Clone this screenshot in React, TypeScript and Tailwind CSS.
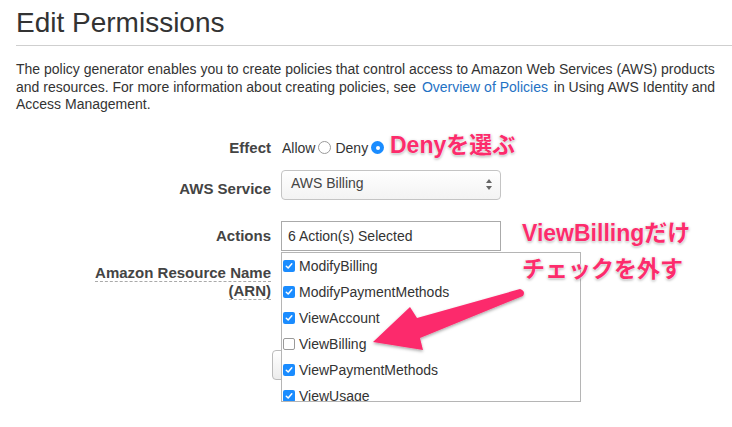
import React from "react";

const FONT = { fontFamily: '"Liberation Sans", Arial, "Noto Sans CJK JP", sans-serif' };

function Check({ checked }: { checked: boolean }) {
  if (!checked)
    return <span className="w-[12px] h-[12px] rounded-[2px] border border-[#9a9a9a] bg-white shrink-0" />;
  return (
    <span className="w-[12px] h-[12px] rounded-[2px] bg-[#1a8cff] shrink-0 flex items-center justify-center">
      <svg width="8" height="8" viewBox="0 0 8 8">
        <path d="M1.3 4.2 L3.2 6 L6.8 1.8" fill="none" stroke="#fff" strokeWidth="1.5" strokeLinecap="round" strokeLinejoin="round" />
      </svg>
    </span>
  );
}

const items: [string, boolean][] = [
  ["ModifyBilling", true],
  ["ModifyPaymentMethods", true],
  ["ViewAccount", true],
  ["ViewBilling", false],
  ["ViewPaymentMethods", true],
  ["ViewUsage", true],
];

export default function App() {
  const note = "[text-shadow:0_0_2px_#fff,0_0_2px_#fff,0_1px_3px_rgba(0,0,0,0.45)]";
  return (
    <div className="relative w-[732px] h-[427px] overflow-hidden bg-white text-[#333]" style={FONT}>
      <div className="pl-4">
        <h1 className="pt-[6px] text-[28px] leading-[34px] font-normal text-[#333]">Edit Permissions</h1>
        <div className="mt-[5px] h-px bg-[#cfcfcf]" />
        <p className="mt-[15px] text-[14px] leading-[17.5px] whitespace-nowrap">
          The policy generator enables you to create policies that control access to Amazon Web Services (AWS) products
          <br />
          and resources. For more information about creating policies, see{" "}
          <span className="text-[#1f72c4] px-[2px]">Overview of Policies</span> in Using AWS Identity and
          <br />
          Access Management.
        </p>

        {/* Effect */}
        <div className="mt-[21px] flex h-[26px] leading-[26px] text-[14px]">
          <div className="w-[255px] text-right font-bold text-[15px] text-[#444]">Effect</div>
          <div className="ml-[11px] flex items-center">
            <span>Allow</span>
            <span className="ml-[3px] w-[13px] h-[13px] rounded-full border border-[#9a9a9a] bg-white" />
            <span className="ml-[4px]">Deny</span>
            <span className="ml-[3px] w-[13px] h-[13px] rounded-full bg-[#1a8cff] flex items-center justify-center">
              <span className="w-[4px] h-[4px] rounded-full bg-white" />
            </span>
          </div>
        </div>

        {/* AWS Service */}
        <div className="mt-[9px] flex h-[30px] text-[14px]">
          <div className="w-[255px] h-[30px] text-right font-bold text-[15px] text-[#444] leading-[38px]">AWS Service</div>
          <div className="ml-[10px] w-[220px] h-[30px] rounded-[4px] border border-[#c4c4c4] bg-gradient-to-b from-white to-[#f3f3f3] flex items-center justify-between pl-[9px] pr-[7px] pb-[3px] text-[#444]">
            <span>AWS Billing</span>
            <svg width="8" height="13" viewBox="0 0 8 13" className="mt-[3px]">
              <path d="M4 1 L7 5 L1 5 Z" fill="#666" />
              <path d="M4 12 L7 8 L1 8 Z" fill="#666" />
            </svg>
          </div>
        </div>

        {/* Actions */}
        <div className="mt-[21px] flex text-[14px]">
          <div className="w-[255px] text-right font-bold text-[15px] text-[#444] leading-[30px]">Actions</div>
          <div className="ml-[10px] w-[220px] h-[30px] border border-[#aaa] bg-white pl-[6px] leading-[28px] text-[#333]">
            6 Action(s) Selected
          </div>
        </div>

        {/* ARN + list */}
        <div className="mt-px flex text-[14px]">
          <div className="w-[255px] text-right font-bold text-[15px] text-[#444] leading-[18px] pt-[12px]">
            <span className="border-b border-dashed border-[#aaa]">
              Amazon Resource Name
              <br />
              (ARN)
            </span>
          </div>
          <div className="ml-[10px] relative">
            <div className="absolute left-[-9px] top-[98px] w-[24px] h-[30px] rounded-[4px] border border-[#bbb] bg-gradient-to-b from-white to-[#ececec]" />
            <div className="relative w-[300px] h-[150px] border border-[#b5b5b5] bg-white overflow-hidden">
              {items.map(([name, c]) => (
                <div key={name} className="flex items-center h-[26px] leading-[26px] pl-[1px]">
                  <Check checked={c} />
                  <span className="ml-[4px] text-[#333]">{name}</span>
                </div>
              ))}
            </div>
          </div>
        </div>
      </div>

      {/* Annotations */}
      <div
        className={`absolute left-[390px] top-[132px] text-[23px] leading-[26px] font-bold text-[#fc2c6c] whitespace-nowrap ${note}`}
      >
        Denyを選ぶ
      </div>
      <div
        className={`absolute left-[522px] top-[215px] text-[23px] leading-[36px] font-bold text-[#fc2c6c] whitespace-nowrap ${note}`}
      >
        ViewBillingだけ
        <br />
        チェックを外す
      </div>

      <svg className="absolute left-0 top-0 pointer-events-none" width="732" height="427">
        <defs>
          <filter id="sh" x="-10%" y="-10%" width="120%" height="130%">
            <feDropShadow dx="0" dy="1.5" stdDeviation="1.5" floodColor="#000" floodOpacity="0.35" />
          </filter>
        </defs>
        <path
          d="M373 342 L410 307 L417 318 L520 289 Q526 291 523 296 L420 338 L423 350 Z"
          fill="#fc2c6c"
          filter="url(#sh)"
        />
      </svg>
    </div>
  );
}
